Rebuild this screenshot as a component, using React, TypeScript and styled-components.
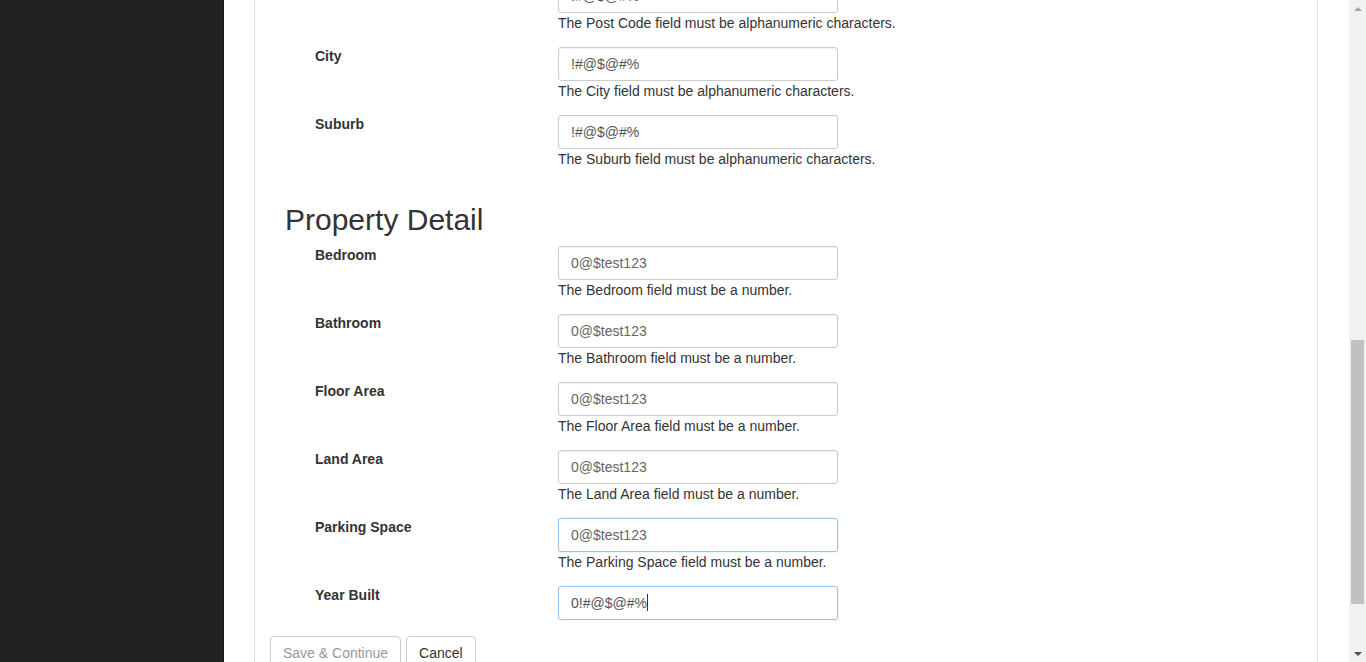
import React from "react";
import styled, { createGlobalStyle } from "styled-components";

const GlobalStyle = createGlobalStyle`
  html, body {
    margin: 0;
    padding: 0;
    height: 100%;
    overflow: hidden;
  }
  body {
    font-family: "Liberation Sans", Arial, Helvetica, sans-serif;
    font-size: 14px;
    line-height: 20px;
    color: #333;
    background: #fff;
  }
`;

type Field = {
  label: string;
  value: string;
  error?: string;
  focused?: boolean;
  muted?: boolean;
  caret?: boolean;
};

const addressFields: Field[] = [
  { label: "Post Code", value: "!#@$@#%", error: "The Post Code field must be alphanumeric characters." },
  { label: "City", value: "!#@$@#%", error: "The City field must be alphanumeric characters." },
  { label: "Suburb", value: "!#@$@#%", error: "The Suburb field must be alphanumeric characters." },
];

const propertyFields: Field[] = [
  { label: "Bedroom", value: "0@$test123", muted: true, error: "The Bedroom field must be a number." },
  { label: "Bathroom", value: "0@$test123", muted: true, error: "The Bathroom field must be a number." },
  { label: "Floor Area", value: "0@$test123", muted: true, error: "The Floor Area field must be a number." },
  { label: "Land Area", value: "0@$test123", muted: true, error: "The Land Area field must be a number." },
  { label: "Parking Space", value: "0@$test123", muted: true, focused: true, error: "The Parking Space field must be a number." },
  { label: "Year Built", value: "0!#@$@#%", focused: true, caret: true },
];

const Shell = styled.div`
  display: flex;
  height: 662px;
  width: 1366px;
  overflow: hidden;
`;

const Sidebar = styled.aside`
  width: 223px;
  flex-shrink: 0;
  background: #222;
  border-right: 1px solid #151515;
`;

const Main = styled.main`
  flex: 1;
  overflow: hidden;
  padding: 0 31px 0 30px;
`;

/* page is scrolled down: the top of the address block is above the fold */
const Panel = styled.section`
  border-left: 1px solid #ddd;
  border-right: 1px solid #ddd;
  padding: 0 15px;
  margin-top: -21px;
  min-height: 800px;
`;

const SectionTitle = styled.h2`
  font-size: 30px;
  font-weight: 400;
  line-height: 33px;
  margin: 34px 0 10px;
  padding-left: 15px;
  color: #333;
`;

const Row = styled.div`
  display: flex;
  margin-bottom: 14px;
`;

const Label = styled.label`
  width: 243px;
  flex-shrink: 0;
  padding-left: 45px;
  margin-top: -1px;
  font-weight: 700;
  line-height: 20px;
  color: #333;
`;

const Control = styled.div`
  display: flex;
  flex-direction: column;
  width: 280px;
`;

const Input = styled.div<{ $focused?: boolean; $muted?: boolean }>`
  height: 34px;
  box-sizing: border-box;
  padding: 6px 12px;
  line-height: 20px;
  border: 1px solid ${({ $focused }) => ($focused ? "#9cc3e6" : "#ccc")};
  border-radius: 3px;
  box-shadow: ${({ $focused }) =>
    $focused ? "0 0 2px rgba(102,175,233,.35)" : "inset 0 1px 1px rgba(0,0,0,.06)"};
  color: ${({ $muted }) => ($muted ? "#666" : "#555")};
  background: #fff;
  white-space: pre;
`;

const Caret = styled.span`
  display: inline-block;
  width: 1px;
  height: 17px;
  background: #333;
  vertical-align: -3px;
`;

const Help = styled.span`
  display: block;
  line-height: 20px;
  white-space: nowrap;
  color: #333;
`;

const Actions = styled.div`
  display: flex;
  gap: 5px;
  margin-top: 16px;
`;

const Button = styled.button<{ $disabled?: boolean }>`
  font-family: inherit;
  font-size: 14px;
  line-height: 20px;
  padding: 6px 12px;
  background: #fff;
  border: 1px solid #ccc;
  border-radius: 4px;
  color: ${({ $disabled }) => ($disabled ? "#999" : "#333")};
  cursor: ${({ $disabled }) => ($disabled ? "not-allowed" : "pointer")};
`;

const Scrollbar = styled.div`
  width: 17px;
  flex-shrink: 0;
  background: #f1f1f1;
  display: flex;
  flex-direction: column;
  align-items: center;
`;

const Arrow = styled.div<{ $down?: boolean }>`
  height: 17px;
  width: 17px;
  display: flex;
  align-items: center;
  justify-content: center;
  &::before {
    content: "";
    border-left: 4px solid transparent;
    border-right: 4px solid transparent;
    ${({ $down }) => ($down ? "border-top: 4px solid #505050;" : "border-bottom: 4px solid #a3a3a3;")}
  }
`;

const Track = styled.div`
  flex: 1;
  width: 100%;
  display: flex;
  justify-content: center;
  padding-top: 323px;
  box-sizing: border-box;
`;

const Thumb = styled.div`
  width: 13px;
  height: 264px;
  background: #c1c1c1;
`;

function FieldRow({ field }: { field: Field }) {
  return (
    <Row>
      <Label>{field.label}</Label>
      <Control>
        <Input $focused={field.focused} $muted={field.muted}>
          {field.value}
          {field.caret && <Caret />}
        </Input>
        {field.error && <Help>{field.error}</Help>}
      </Control>
    </Row>
  );
}

export default function App() {
  return (
    <>
      <GlobalStyle />
      <Shell>
        <Sidebar />
        <Main>
          <Panel>
            {addressFields.map((f) => (
              <FieldRow key={f.label} field={f} />
            ))}
            <SectionTitle>Property Detail</SectionTitle>
            {propertyFields.map((f) => (
              <FieldRow key={f.label} field={f} />
            ))}
            <Actions>
              <Button $disabled>Save &amp; Continue</Button>
              <Button>Cancel</Button>
            </Actions>
          </Panel>
        </Main>
        <Scrollbar>
          <Arrow />
          <Track>
            <Thumb />
          </Track>
          <Arrow $down />
        </Scrollbar>
      </Shell>
    </>
  );
}
